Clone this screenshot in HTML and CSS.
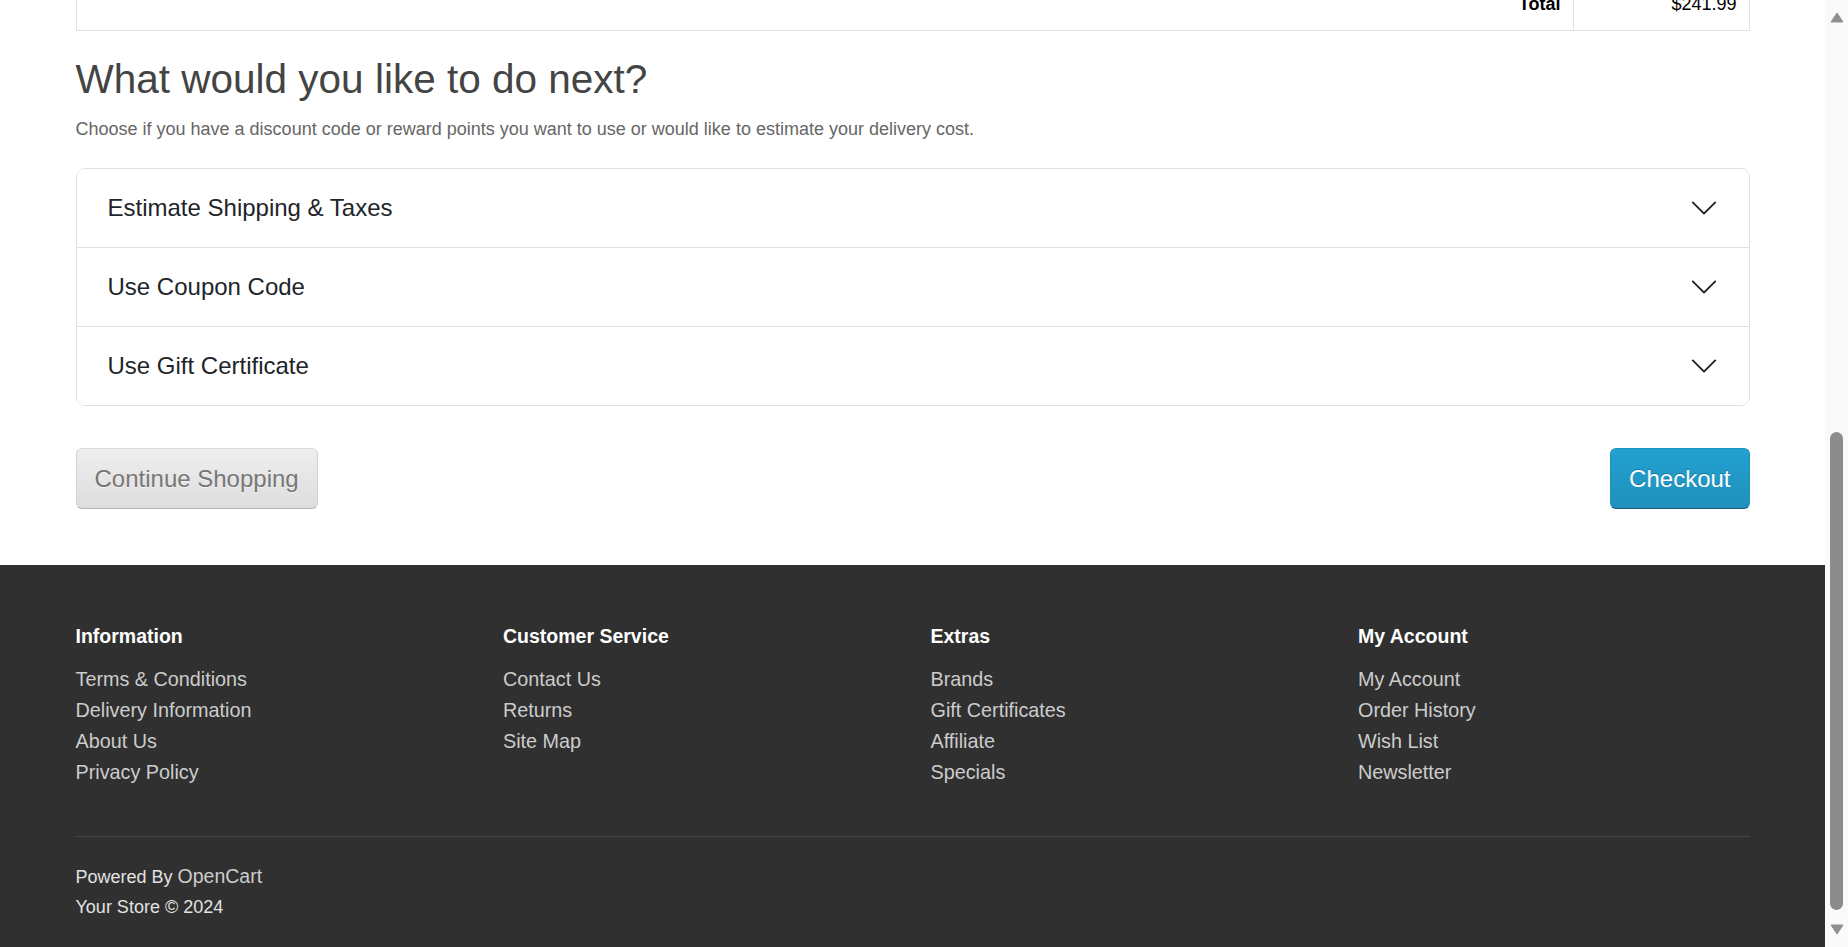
FILE: index.html
```html
<!DOCTYPE html>
<html lang="en">
<head>
<meta charset="utf-8">
<title>Shopping Cart</title>
<link rel="stylesheet" href="styles.css">
</head>
<body>
<div class="window">
  <div class="viewport">
    <div class="page">
      <main class="container content">
        <table class="cart">
          <colgroup><col><col class="c-total"></colgroup>
          <tfoot>
            <tr><td class="r"><strong>Total</strong></td><td class="r">$241.99</td></tr>
          </tfoot>
        </table>

        <h2 class="next-title">What would you like to do next?</h2>
        <p class="next-text">Choose if you have a discount code or reward points you want to use or would like to estimate your delivery cost.</p>

        <div class="accordion">
          <div class="acc-item">
            <button class="acc-btn" type="button"><span>Estimate Shipping &amp; Taxes</span>
              <svg class="chev" viewBox="0 0 16 16"><path fill-rule="evenodd" d="M1.646 4.646a.5.5 0 0 1 .708 0L8 10.293l5.646-5.647a.5.5 0 0 1 .708.708l-6 6a.5.5 0 0 1-.708 0l-6-6a.5.5 0 0 1 0-.708z"/></svg>
            </button>
          </div>
          <div class="acc-item">
            <button class="acc-btn" type="button"><span>Use Coupon Code</span>
              <svg class="chev" viewBox="0 0 16 16"><path fill-rule="evenodd" d="M1.646 4.646a.5.5 0 0 1 .708 0L8 10.293l5.646-5.647a.5.5 0 0 1 .708.708l-6 6a.5.5 0 0 1-.708 0l-6-6a.5.5 0 0 1 0-.708z"/></svg>
            </button>
          </div>
          <div class="acc-item">
            <button class="acc-btn" type="button"><span>Use Gift Certificate</span>
              <svg class="chev" viewBox="0 0 16 16"><path fill-rule="evenodd" d="M1.646 4.646a.5.5 0 0 1 .708 0L8 10.293l5.646-5.647a.5.5 0 0 1 .708.708l-6 6a.5.5 0 0 1-.708 0l-6-6a.5.5 0 0 1 0-.708z"/></svg>
            </button>
          </div>
        </div>

        <div class="actions">
          <a class="btn btn-light" href="#">Continue Shopping</a>
          <a class="btn btn-primary" href="#">Checkout</a>
        </div>
      </main>

      <footer class="footer">
        <div class="container">
          <div class="footer-cols">
            <div class="fcol">
              <h5>Information</h5>
              <ul><li><a href="#">Terms &amp; Conditions</a></li><li><a href="#">Delivery Information</a></li><li><a href="#">About Us</a></li><li><a href="#">Privacy Policy</a></li></ul>
            </div>
            <div class="fcol">
              <h5>Customer Service</h5>
              <ul><li><a href="#">Contact Us</a></li><li><a href="#">Returns</a></li><li><a href="#">Site Map</a></li></ul>
            </div>
            <div class="fcol">
              <h5>Extras</h5>
              <ul><li><a href="#">Brands</a></li><li><a href="#">Gift Certificates</a></li><li><a href="#">Affiliate</a></li><li><a href="#">Specials</a></li></ul>
            </div>
            <div class="fcol">
              <h5>My Account</h5>
              <ul><li><a href="#">My Account</a></li><li><a href="#">Order History</a></li><li><a href="#">Wish List</a></li><li><a href="#">Newsletter</a></li></ul>
            </div>
          </div>
          <hr class="footer-rule">
          <p class="powered">Powered By <a href="#">OpenCart</a><br>Your Store &copy; 2024</p>
        </div>
      </footer>
    </div>
  </div>

  <div class="scrollbar" aria-hidden="true">
    <div class="sb-btn"><svg class="sb-arrow" viewBox="0 0 14 11"><path d="M7 1L13 10H1Z"/></svg></div>
    <div class="sb-track"><div class="sb-thumb"></div></div>
    <div class="sb-btn"><svg class="sb-arrow" viewBox="0 0 14 11"><path d="M1 1H13L7 10Z"/></svg></div>
  </div>
</div>
</body>
</html>
```

FILE: styles.css
```css
* { box-sizing: border-box; }

html, body { height: 100%; }

body {
  margin: 0;
  font-family: "Liberation Sans", Arial, sans-serif;
  font-size: 18px;
  line-height: 27px;
  color: #666;
  background: #fff;
}

a { color: inherit; text-decoration: none; }

/* browser window: scrolled page + scrollbar */
.window { display: flex; height: 100vh; overflow: hidden; }
.viewport {
  flex: 1;
  min-width: 0;
  display: flex;
  flex-direction: column;
  justify-content: flex-end;
  overflow: hidden;
}
.page { flex: none; }

.scrollbar {
  width: 23px;
  flex: none;
  display: flex;
  flex-direction: column;
  background: #fafafa;
}
.sb-btn { height: 35px; display: flex; align-items: center; justify-content: center; flex: none; }
.sb-arrow { width: 14px; height: 11px; fill: #8f8f8f; stroke: #8f8f8f; stroke-linejoin: round; }
.sb-track {
  flex: 1;
  display: flex;
  flex-direction: column;
  justify-content: flex-end;
  align-items: center;
  padding-bottom: 2px;
}
.sb-thumb { width: 13px; height: 478px; border-radius: 7px; background: #8c8c8c; }

.container { width: 1674px; margin: 0 auto; }

.content { padding-bottom: 56px; }

/* cart totals */
.cart { width: 100%; border-collapse: collapse; border: 1px solid #dee2e6; color: #000; }
.cart td { border: 1px solid #dee2e6; padding: 12px; line-height: 27px; vertical-align: middle; }
.cart .r { text-align: right; }
.cart strong { font-weight: 700; }
.c-total { width: 176px; }

/* what next */
.next-title {
  margin: 24px 0 0;
  font-size: 40.5px;
  line-height: 49px;
  font-weight: 400;
  color: #444;
}
.next-text { margin: 12px 0 25px; line-height: 27px; color: #666; }

.accordion { border: 1px solid #dee2e6; border-radius: 9px; overflow: hidden; background: #fff; }
.acc-item + .acc-item { border-top: 1px solid #dee2e6; }
.acc-btn {
  display: flex;
  width: 100%;
  height: 78px;
  align-items: center;
  justify-content: space-between;
  padding: 0 30px 0 31px;
  border: 0;
  background: #fff;
  cursor: pointer;
  font-family: "Liberation Sans", Arial, sans-serif;
  font-size: 24px;
  color: #212529;
  text-align: left;
}
.chev { width: 30px; height: 30px; fill: #212529; flex: none; }

.actions { display: flex; justify-content: space-between; margin-top: 42px; }
.btn {
  display: inline-block;
  height: 61px;
  padding: 0 18px;
  line-height: 60px;
  font-size: 24px;
  border: 1px solid;
  border-radius: 6px;
}
.btn-light {
  color: #777;
  text-shadow: 0 1px 0 rgba(255, 255, 255, 0.5);
  background-image: linear-gradient(#eeeeee, #dddddd);
  border-color: #dadada #d2d2d2 #b3b3b3;
}
.btn-primary {
  color: #fff;
  text-shadow: 0 -1px 0 rgba(0, 0, 0, 0.25);
  background-image: linear-gradient(#23a1d1, #1f90bb);
  border-color: #1f90bb #1f90bb #145e7a;
}

/* footer */
.footer { background: #303030; color: #e2e2e2; padding: 58px 0 25px; }
.footer-cols { display: grid; grid-template-columns: repeat(4, 1fr); column-gap: 36px; }
.fcol h5 { margin: 0; font-size: 19.5px; line-height: 27px; font-weight: 700; color: #fff; }
.fcol ul { list-style: none; margin: 14px 0 0; padding: 0; }
.fcol li { font-size: 19.8px; line-height: 31px; }
.fcol a { color: #ccc; }
.footer-rule { margin: 48px 0 0; border: 0; border-top: 1px solid #444; height: 0; }
.powered { margin: 25px 0 0; line-height: 30px; color: #e2e2e2; }
.powered a { color: #ccc; font-size: 19.5px; line-height: 20px; }
```
